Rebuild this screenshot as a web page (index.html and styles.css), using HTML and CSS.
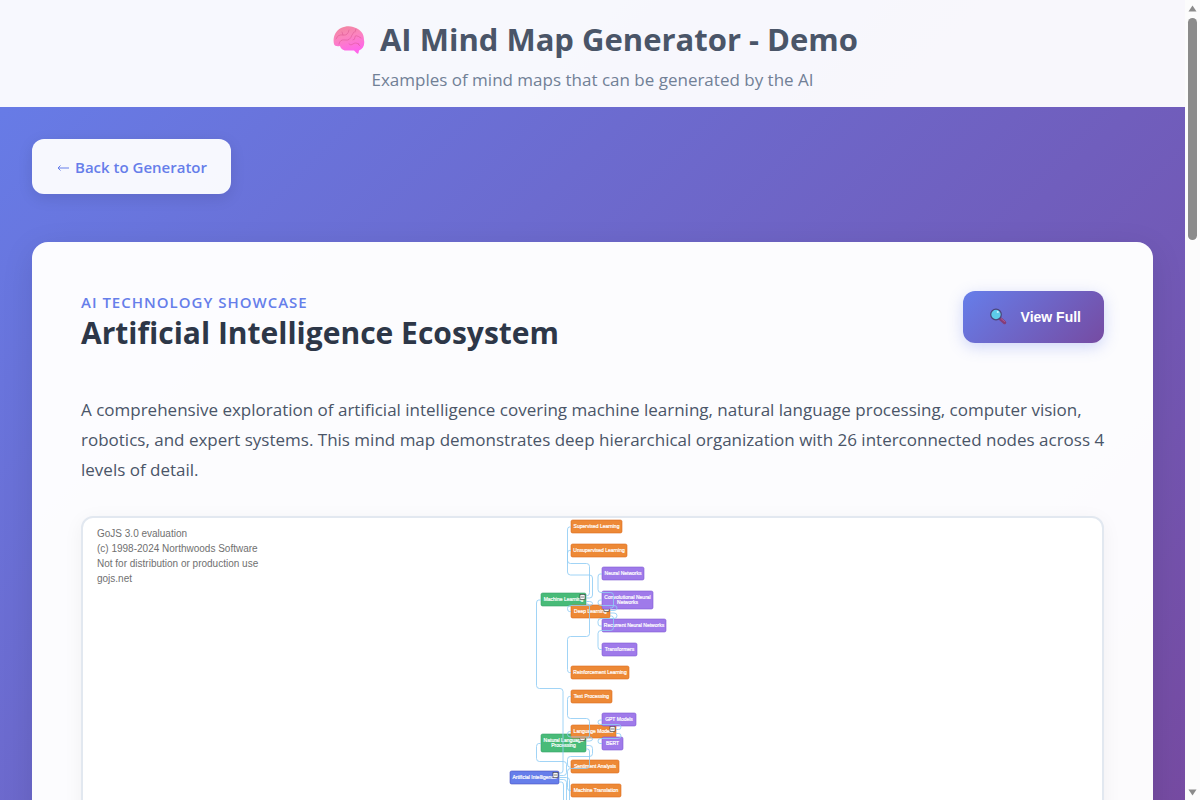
FILE: index.html
```html
<!DOCTYPE html>
<html lang="en">
<head>
<meta charset="utf-8">
<meta name="viewport" content="width=device-width, initial-scale=1">
<title>AI Mind Map Generator - Demo</title>
<link rel="stylesheet" href="styles.css">
</head>
<body>
<div class="shell">
  <div class="page">
    <header class="header">
      <h1 class="header-title">
        <svg class="brain" viewBox="0 0 32 28" aria-hidden="true">
          <defs><linearGradient id="brainFill" x1="0" y1="0" x2="0.3" y2="1"><stop offset="0" stop-color="#f0869c"/><stop offset="0.45" stop-color="#fb85bd"/><stop offset="1" stop-color="#ff66ea"/></linearGradient></defs>
          <path fill="url(#brainFill)" d="M1 18C-.5 12 2 5 8 2C14-1 20 0 24 2.500C29 5 31 9 31 14C32 19 30 23 26 24.500L25.500 27Q25 28.500 23.500 27L21 24.500H13C9.500 24.500 7.500 22 7 20C4 20.500 1.500 20 1 18Z"/>
          <path fill="none" stroke="#d8528e" stroke-opacity=".6" stroke-width=".8" stroke-linecap="round" d="M3 13Q5 8 10 9T16 4M6 18Q7 13 12 14T19 9L21 6M16 18Q18 20 20 18T26 18M20 14Q22 14 22 11T28 12M23 3L22 6M25 18L27 20M10 9L9 6"/>
        </svg>
        <span>AI Mind Map Generator - Demo</span>
      </h1>
      <p class="header-subtitle">Examples of mind maps that can be generated by the AI</p>
    </header>
    <main class="content">
      <a class="back" href="#"><svg class="arrow" viewBox="0 0 12 8" aria-hidden="true"><path d="M12 4H1M3.500 1.500L1 4L3.500 6.500"/></svg>Back to Generator</a>
      <section class="card">
        <div class="card-head">
          <div>
            <p class="category">AI TECHNOLOGY SHOWCASE</p>
            <h2 class="card-title">Artificial Intelligence Ecosystem</h2>
          </div>
          <button class="view" type="button">
            <svg class="lens" viewBox="0 0 18 18" aria-hidden="true">
              <path d="M11 10.500L15.500 14.500" stroke="#843d78" stroke-width="3.500" stroke-linecap="round"/>
              <path d="M12 10.500L15.500 13.500" stroke="#b45b91" stroke-width="1" stroke-linecap="round"/>
              <circle cx="7" cy="6.500" r="5.300" fill="#5dcbe8" stroke="#4a4478" stroke-width="1.200"/>
              <circle cx="8.800" cy="4" r="1.100" fill="#c9f4ff"/>
            </svg>
            <span>View Full</span>
          </button>
        </div>
        <p class="description">A comprehensive exploration of artificial intelligence covering machine learning, natural language processing, computer vision, robotics, and expert systems. This mind map demonstrates deep hierarchical organization with 26 interconnected nodes across 4 levels of detail.</p>
        <div class="diagram">
          <p class="notice">GoJS 3.0 evaluation<br>(c) 1998-2024 Northwoods Software<br>Not for distribution or production use<br>gojs.net</p>
          <svg class="map" viewBox="500 518 185 310" role="img" aria-label="Artificial intelligence mind map"></svg>
        </div>
      </section>
    </main>
  </div>
  <div class="scrollbar" aria-hidden="true">
    <svg class="scroll-arrow" viewBox="0 0 9 7"><path d="M4.500 0.500L8.500 6.500H.5Z"/></svg>
    <div class="thumb"></div>
    <svg class="scroll-arrow scroll-down" viewBox="0 0 9 7"><path d="M4.500 6.500L8.500 .5H.5Z"/></svg>
  </div>
</div>
<script src="map.js"></script>
</body>
</html>
```
FILE: styles.css
```css
* { box-sizing: border-box; }
body {
  margin: 0;
  font-family: "Open Sans", "Noto Sans", sans-serif;
  color: #4a5568;
}
h1, h2, p { margin: 0; }
.shell {
  display: grid;
  grid-template-columns: minmax(0, 1fr) 15px;
  height: 100vh;
  overflow: hidden;
}
.page {
  overflow: hidden;
  background: linear-gradient(135deg, #667eea 0%, #764ba2 100%);
}
.header {
  padding: 16px 32px;
  text-align: center;
  background: rgba(255, 255, 255, 0.95);
}
.header-title {
  display: flex;
  align-items: center;
  justify-content: center;
  gap: 15px;
  padding-left: 6px;
  font-size: 31px;
  line-height: 47px;
  font-weight: 700;
}
.brain { width: 32px; height: 28px; }
.header-subtitle {
  margin-top: 5px;
  font-size: 17px;
  line-height: 23px;
  color: #718096;
}
.content { padding: 32px; }
.back {
  display: inline-flex;
  align-items: center;
  gap: 6px;
  padding: 16px 24px 14px 25px;
  border-radius: 12px;
  background: rgba(255, 255, 255, 0.95);
  box-shadow: 0 4px 15px rgba(0, 0, 0, 0.1);
  color: #667eea;
  font-size: 15px;
  line-height: 25px;
  font-weight: 600;
  text-decoration: none;
}
.arrow { width: 12px; height: 8px; fill: none; stroke: #667eea; stroke-width: 1; }
.card {
  margin-top: 48px;
  padding: 49px;
  border-radius: 16px;
  background: rgba(255, 255, 255, 0.98);
  box-shadow: 0 8px 32px rgba(0, 0, 0, 0.1);
}
.card-head {
  display: flex;
  justify-content: space-between;
  align-items: flex-start;
  margin-bottom: 43px;
}
.category {
  font-size: 15px;
  line-height: 22px;
  font-weight: 600;
  letter-spacing: 1px;
  color: #667eea;
}
.card-title {
  font-size: 30px;
  line-height: 39px;
  font-weight: 700;
  color: #2d3748;
}
.view {
  display: flex;
  align-items: center;
  gap: 14px;
  height: 52px;
  padding: 0 23px 0 26px;
  border: 0;
  border-radius: 12px;
  background: linear-gradient(135deg, #667eea, #764ba2);
  box-shadow: 0 4px 15px rgba(102, 126, 234, 0.3);
  color: #fff;
  font: 700 14px "Liberation Sans", sans-serif;
}
.lens { width: 18px; height: 18px; fill: none; }
.description {
  margin: 0 -16px 31px 0;
  font-size: 17px;
  line-height: 30px;
}
.diagram {
  position: relative;
  height: 600px;
  border: 2px solid #e2e8f0;
  border-radius: 12px;
  background: #fff;
  box-shadow: 0 4px 20px rgba(0, 0, 0, 0.05);
}
.notice {
  position: absolute;
  top: 8px;
  left: 14px;
  font: 10px/15px "Liberation Sans", sans-serif;
  color: #707070;
}
.map {
  display: block;
  width: 185px;
  height: 310px;
  margin: 0 auto;
}
.link { fill: none; stroke: #90cdf4; stroke-width: 1; stroke-opacity: 0.85; }
.node { stroke-width: 0.6; }
.root { fill: #667eea; stroke: #4c51bf; }
.branch { fill: #48bb78; stroke: #38a169; }
.topic { fill: #ed8936; stroke: #dd6b20; }
.leaf { fill: #9f7aea; stroke: #805ad5; }
.label {
  fill: #fff;
  stroke: #fff;
  stroke-width: 0.2;
  font: 5px "Liberation Sans", sans-serif;
  text-anchor: middle;
}
.toggle { fill: #f8f8f8; stroke: #333; stroke-width: 0.6; }
.scrollbar {
  display: flex;
  flex-direction: column;
  align-items: center;
  padding: 5px 0 4px;
  background: #fcfcfc;
}
.scroll-arrow { width: 9px; height: 7px; fill: #8b8b8b; }
.thumb {
  width: 9px;
  height: 222px;
  margin-top: 6px;
  border-radius: 5px;
  background: #8b8b8b;
}
.scroll-down { margin-top: auto; }
```
FILE: map.js
```js
const svg = document.querySelector(".map");

// kind, x, y, width, height, label lines, optional toggle
const nodes = [
  ["root", 510, 771, 49, 13, ["Artificial Intelligence"], true],
  ["branch", 541, 593, 45, 13, ["Machine Learning"], true],
  ["branch", 541, 734, 45, 18, ["Natural Language", "Processing"], true],
  ["topic", 571, 520, 51, 13, ["Supervised Learning"]],
  ["topic", 571, 544, 56, 13, ["Unsupervised Learning"]],
  ["topic", 571, 605, 39, 13, ["Deep Learning"], true],
  ["topic", 571, 666, 58, 13, ["Reinforcement Learning"]],
  ["topic", 571, 690, 41, 13, ["Text Processing"]],
  ["topic", 571, 725, 45, 13, ["Language Models"], true],
  ["topic", 571, 760, 48, 13, ["Sentiment Analysis"]],
  ["topic", 571, 784, 50, 13, ["Machine Translation"]],
  ["leaf", 602, 567, 42, 13, ["Neural Networks"]],
  ["leaf", 602, 591, 51, 18, ["Convolutional Neural", "Networks"]],
  ["leaf", 602, 619, 64, 13, ["Recurrent Neural Networks"]],
  ["leaf", 602, 643, 35, 13, ["Transformers"]],
  ["leaf", 602, 713, 34, 13, ["GPT Models"]],
  ["leaf", 602, 737, 21, 13, ["BERT"]]
];

// start x, start y, outer x, turn y, inner x, end y, end x
const links = [
  [586, 595.5, 589.5, 563.5, 567.5, 527, 571],
  [586, 598, 592.5, 575, 567.5, 550.5, 571],
  [586, 601.5, 592.5, 605.5, 567.5, 611.5, 571],
  [586, 604, 589.5, 636.5, 567.5, 672.5, 571],
  [610, 608, 613.5, 592.5, 598, 574, 602],
  [610, 610.5, 617, 605.5, 598, 600, 602],
  [610, 613, 617, 618.5, 598, 626, 602],
  [610, 616, 613.5, 630.5, 598, 649.5, 602],
  [559, 773, 563, 688.5, 536.5, 600, 541],
  [559, 775.5, 566.5, 761.5, 536.5, 743.5, 541],
  [586, 738, 589.5, 718.5, 567.5, 696.5, 571],
  [586, 741, 592.5, 737, 567.5, 731.5, 571],
  [586, 745.5, 592.5, 756.5, 567.5, 767, 571],
  [586, 749, 589.5, 768.5, 567.5, 790.5, 571],
  [616, 729.5, 621, 724.5, 598, 720, 602],
  [616, 733.5, 621, 738.5, 598, 743.5, 602],
  [559, 777.5, 569.5, 850, 540, 860, 541],
  [559, 779.5, 566.5, 850, 540, 860, 541],
  [559, 782, 563.5, 850, 540, 860, 541]
];

function add(name, attrs, text) {
  const el = document.createElementNS("http://www.w3.org/2000/svg", name);
  Object.entries(attrs).forEach(([key, value]) => el.setAttribute(key, value));
  if (text) el.textContent = text;
  svg.appendChild(el);
}

function roundedPath(points) {
  let d = `M${points[0]}`;
  for (let i = 1; i < points.length - 1; i++) {
    const p = points[i];
    const toward = (q) => {
      const dist = Math.hypot(q[0] - p[0], q[1] - p[1]);
      const r = Math.min(3, dist / 2) / dist;
      return [p[0] + (q[0] - p[0]) * r, p[1] + (q[1] - p[1]) * r];
    };
    d += `L${toward(points[i - 1])}Q${p} ${toward(points[i + 1])}`;
  }
  return d + `L${points[points.length - 1]}`;
}

nodes.forEach(([kind, x, y, width, height, lines, toggle]) => {
  add("rect", { class: `node ${kind}`, x, y, width, height, rx: 1.6 });
  lines.forEach((line, i) => {
    const top = y + height / 2 + 1.5 - (lines.length - 1) * 2.5;
    add("text", { class: "label", x: x + width / 2, y: top + i * 5 }, line);
  });
  if (toggle) {
    const tx = x + width - 6;
    add("rect", { class: "toggle", x: tx, y: y + 1.5, width: 5, height: 5 });
    add("path", { class: "toggle", d: `M${tx + 1} ${y + 4}h3` });
  }
});

links.forEach(([sx, sy, ox, ty, ix, ey, ex]) => {
  add("path", { class: "link", d: roundedPath([[sx, sy], [ox, sy], [ox, ty], [ix, ty], [ix, ey], [ex, ey]]) });
});
```
